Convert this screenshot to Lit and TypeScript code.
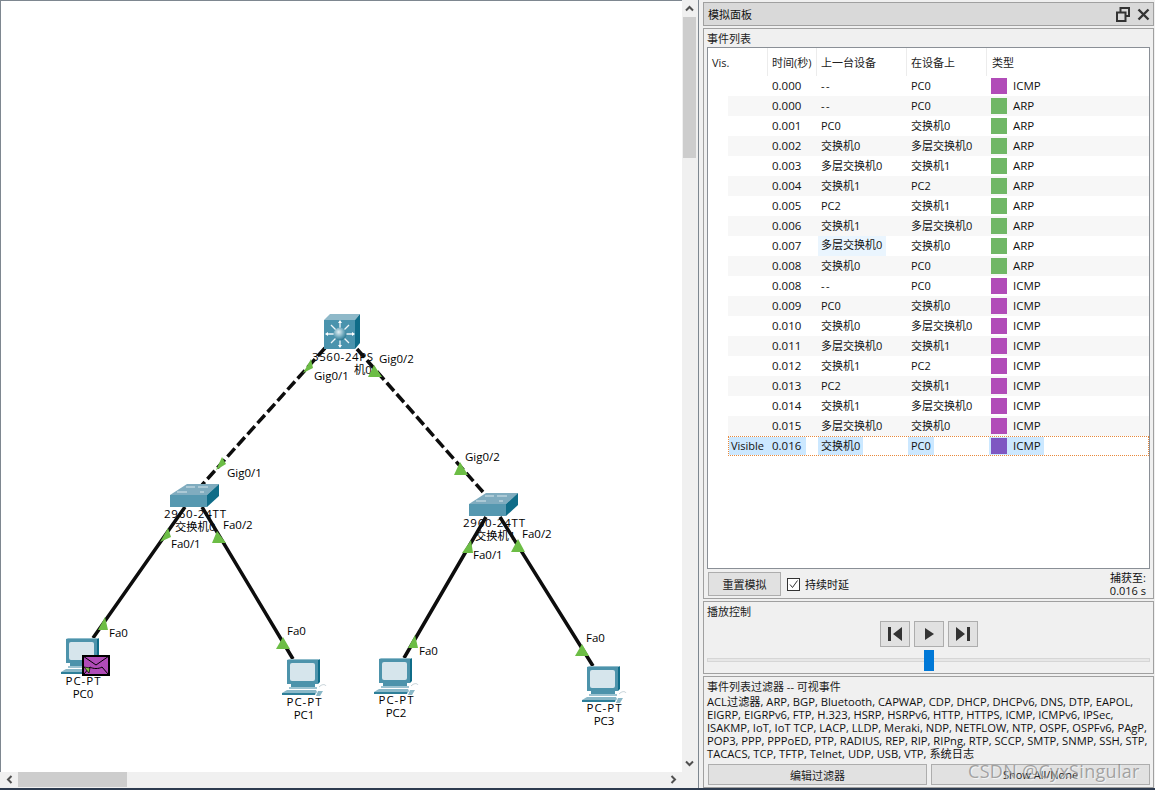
import { LitElement, html, css, svg } from 'lit';
import { customElement } from 'lit/decorators.js';

const PURPLE = '#b14cb8';
const GREEN = '#70b766';

type Row = [string, string, string, string, string];

const rows: Row[] = [
  ['0.000', '--', 'PC0', PURPLE, 'ICMP'],
  ['0.000', '--', 'PC0', GREEN, 'ARP'],
  ['0.001', 'PC0', '交换机0', GREEN, 'ARP'],
  ['0.002', '交换机0', '多层交换机0', GREEN, 'ARP'],
  ['0.003', '多层交换机0', '交换机1', GREEN, 'ARP'],
  ['0.004', '交换机1', 'PC2', GREEN, 'ARP'],
  ['0.005', 'PC2', '交换机1', GREEN, 'ARP'],
  ['0.006', '交换机1', '多层交换机0', GREEN, 'ARP'],
  ['0.007', '多层交换机0', '交换机0', GREEN, 'ARP'],
  ['0.008', '交换机0', 'PC0', GREEN, 'ARP'],
  ['0.008', '--', 'PC0', PURPLE, 'ICMP'],
  ['0.009', 'PC0', '交换机0', PURPLE, 'ICMP'],
  ['0.010', '交换机0', '多层交换机0', PURPLE, 'ICMP'],
  ['0.011', '多层交换机0', '交换机1', PURPLE, 'ICMP'],
  ['0.012', '交换机1', 'PC2', PURPLE, 'ICMP'],
  ['0.013', 'PC2', '交换机1', PURPLE, 'ICMP'],
  ['0.014', '交换机1', '多层交换机0', PURPLE, 'ICMP'],
  ['0.015', '多层交换机0', '交换机0', PURPLE, 'ICMP'],
];

const triangles = [
  '311,359 313,368 303,373', '222,457 226,464 216,470', '168,528 171,537 160,542',
  '217,531 226,543 212,543', '374,365 382,377 368,377', '460,462 468,475 454,475',
  '471,540 473,553 462,553', '518,539 525,552 511,552', '105,617 108,630 98,630',
  '283,637 290,649 276,649', '415,635 418,648 408,648', '582,644 589,656 575,656',
];

const portLabels: [number, number, string][] = [
  [314, 380, 'Gig0/1'], [227, 477, 'Gig0/1'], [379, 363, 'Gig0/2'], [465, 461, 'Gig0/2'],
  [171, 548, 'Fa0/1'], [223, 529, 'Fa0/2'], [522, 538, 'Fa0/2'], [473, 559, 'Fa0/1'],
  [109, 637, 'Fa0'], [287, 635, 'Fa0'], [419, 655, 'Fa0'], [586, 642, 'Fa0'],
];

const pcLabels: [number, number, string][] = [
  [83, 685, 'PC0'], [304, 706, 'PC1'], [396, 704, 'PC2'], [604, 712, 'PC3'],
];

function pc(x: number, y: number) {
  return svg`<g transform="translate(${x} ${y})">
    <path d="M5 1h31v24H5z" fill="#4d93ab"/>
    <path d="M36 1l2-1v23l-2 2z" fill="#0f6c88"/>
    <path d="M5 1l2-1h31l-2 1z" fill="#8fbccb"/>
    <rect x="8" y="4" width="25" height="18" rx="2" fill="#d6e5ec"/>
    <path d="M9 25h24v3H9z" fill="#4d93ab"/>
    <path d="M7 28h28v2H7z" fill="#9cc3d1"/>
    <path d="M5 31h29l1 2-2 3H0v-2z" fill="#8ab8c8"/>
    <path d="M0 34h33v2H0z" fill="#2e7f99"/>
    <path d="M36 32h5l-3 5h-4z" fill="#8ab8c8"/>
    <path d="M37 28c3-3 6-3 7-1" fill="none" stroke="#c3d0d6" stroke-width="1"/>
  </g>`;
}

function sw(x: number, y: number) {
  return svg`<g transform="translate(${x} ${y})">
    <path d="M0 11L17 0h32L37 11z" fill="#80acbf"/>
    <path d="M0 11h37v12H0z" fill="#5698b0"/>
    <path d="M37 11L49 0v12L37 23z" fill="#0f6c88"/>
    <path d="M16 3h9M28 3h10M7 8h10M30 8h4" stroke="#d7e6ec" stroke-width="1"/>
  </g>`;
}

@customElement('app-root')
export class AppRoot extends LitElement {
  static styles = css`
    :host {
      display: block;
      width: 1155px;
      height: 790px;
      overflow: hidden;
      background: #f0f0f0;
      color: #111;
      font-family: 'Open Sans', 'Noto Sans CJK SC', sans-serif;
      font-size: 11px;
    }
    * {
      box-sizing: border-box;
    }
    .page {
      position: relative;
      display: flex;
      height: 790px;
      border-bottom: 2px solid #2d3b4f;
    }
    .left {
      display: grid;
      grid-template-columns: 682px 15px;
      grid-template-rows: 772px 15px;
      width: 697px;
      flex: none;
    }
    .canvas {
      background: #fff;
      border-left: 1px solid #7e8790;
      border-top: 1px solid #7e8790;
    }
    .canvas svg {
      display: block;
      margin: -1px 0 0 -1px;
    }
    .canvas text {
      font-family: 'Open Sans', 'Noto Sans CJK SC', sans-serif;
      font-size: 11.5px;
      fill: #000;
    }
    .canvas text.cn {
      font-size: 11.3px;
    }
    .vbar {
      display: flex;
      flex-direction: column;
      align-items: center;
      background: #f0f0f0;
      padding: 0 1px;
    }
    .vbar .thumb {
      width: 13px;
      height: 141px;
      background: #cdcdcd;
    }
    .vbar .gap {
      flex: 1;
    }
    .arrow {
      flex: none;
      display: flex;
      align-items: center;
      justify-content: center;
      width: 15px;
      height: 17px;
    }
    .hbar {
      display: flex;
      align-items: center;
      background: #f0f0f0;
    }
    .hbar .arrow {
      width: 18px;
      height: 15px;
    }
    .hbar .thumb {
      width: 109px;
      height: 15px;
      background: #cdcdcd;
    }
    .hbar .gap {
      flex: 1;
    }
    .right {
      flex: 1;
      display: flex;
      flex-direction: column;
      gap: 2px;
      margin-left: 1px;
      border-left: 1px solid #7e8790;
      padding: 2px 2px 0 4px;
    }
    .title {
      display: flex;
      align-items: center;
      justify-content: space-between;
      height: 24px;
      padding: 0 3px 0 4px;
      background: #d9d9d9;
      border: 1px solid #a0a0a0;
    }
    .title .icons {
      display: flex;
      align-items: center;
      gap: 7px;
    }
    .group {
      border: 1px solid #a0a0a0;
      padding: 0 3px;
    }
    .group-label {
      display: block;
      line-height: 16px;
      height: 16px;
      color: #222;
    }
    .events {
      height: 571px;
      padding-top: 2px;
    }
    .table {
      height: 522px;
      background: #fff;
      border: 1px solid #8a8f96;
    }
    .row {
      display: grid;
      grid-template-columns: 60px 49px 90px 80px 1fr;
      height: 20px;
      align-items: center;
    }
    .row.head {
      height: 28px;
      color: #222;
    }
    .row.head > span {
      height: 28px;
      line-height: 30px;
      padding-left: 4px;
      border-right: 1px solid #ececec;
    }
    .row.head > span:last-child {
      border-right: 0;
      padding-left: 5px;
    }
    .row .time,
    .row .dev {
      padding: 0 0 2px 4px;
    }
    .row .time,
    .type {
      font-size: 11.5px;
    }
    .row .dash {
      letter-spacing: 1.5px;
    }
    .row.alt {
      background: linear-gradient(to right, #fff 20px, #f7f7f7 20px);
    }
    .row .dev.hover {
      height: 20px;
      line-height: 18px;
      margin-left: 1px;
      padding-left: 3px;
      background: #eaf5fe;
      width: 68px;
    }
    .type {
      display: flex;
      align-items: center;
      gap: 6px;
      height: 20px;
      padding-left: 4px;
    }
    .type b {
      font-weight: 400;
      margin-bottom: 2px;
    }
    .swatch {
      width: 16px;
      height: 16px;
    }
    .row.sel {
      grid-template-columns: 39px 49px 90px 80px 1fr;
      margin-left: 20px;
      border: 1px dotted #e8893c;
    }
    .row.sel > span {
      display: inline-flex;
      align-items: center;
      justify-self: start;
      height: 18px;
      background: #cce8ff;
    }
    .row.sel .vis {
      width: 39px;
      padding: 0 0 2px 2px;
    }
    .row.sel .time {
      width: 38px;
    }
    .row.sel .dev {
      margin-left: 1px;
      padding: 0 3px 2px;
    }
    .row.sel .type {
      margin-left: 2px;
      padding: 0 3px 0 2px;
    }
    .actions {
      display: flex;
      align-items: center;
      height: 30px;
      padding-left: 1px;
    }
    button {
      font: inherit;
      color: #222;
      background: #e1e1e1;
      border: 1px solid #adadad;
      padding: 0;
    }
    .reset {
      width: 73px;
      height: 24px;
    }
    .check {
      display: flex;
      align-items: center;
      gap: 5px;
      margin-left: 6px;
    }
    .box {
      display: flex;
      width: 13px;
      height: 13px;
      background: #fff;
      border: 1px solid #333;
    }
    .captured {
      margin-left: auto;
      text-align: right;
      line-height: 13px;
      padding-right: 4px;
    }
    .play {
      height: 73px;
      padding-top: 2px;
    }
    .transport {
      display: flex;
      justify-content: center;
      gap: 4px;
      margin-top: 1px;
      padding-left: 1px;
    }
    .transport button {
      display: flex;
      align-items: center;
      justify-content: center;
      width: 30px;
      height: 26px;
    }
    .slider {
      position: relative;
      height: 4px;
      margin-top: 11px;
      background: #e7e7e7;
      border: 1px solid #d6d6d6;
    }
    .slider i {
      position: absolute;
      left: 216px;
      top: -9px;
      width: 10px;
      height: 21px;
      background: #0078d7;
    }
    .filter {
      height: 112px;
      padding-top: 2px;
    }
    .filter p {
      margin: 0;
      line-height: 13px;
      font-size: 11.2px;
      white-space: nowrap;
    }
    .filter .buttons {
      display: grid;
      grid-template-columns: 219px 219px;
      gap: 4px;
      margin: 4px 0 0 1px;
    }
    .filter button {
      height: 21px;
    }
    .mark {
      position: absolute;
      left: 968px;
      top: 759px;
      font-size: 18px;
      line-height: 24px;
      letter-spacing: 0.3px;
      color: rgba(115, 115, 115, 0.62);
      text-shadow: 1px 1px 1px rgba(255, 255, 255, 0.7);
      white-space: nowrap;
    }
  `;

  private diagram() {
    return svg`<svg width="682" height="772" viewBox="0 0 682 772">
      <defs>
        <radialGradient id="ball" cx="0.4" cy="0.35" r="0.7">
          <stop offset="0" stop-color="#e3f0f4"/>
          <stop offset="0.55" stop-color="#6fa9bd"/>
          <stop offset="1" stop-color="#1f6f8a"/>
        </radialGradient>
      </defs>
      <text x="312" y="361" textLength="61">3560-24PS</text>
      <text class="cn" x="354" y="374">机0</text>
      <text x="164" y="518" textLength="62">2960-24TT</text>
      <text class="cn" x="175" y="531">交换机0</text>
      <text x="463" y="527" textLength="62">2960-24TT</text>
      <text class="cn" x="475" y="540">交换机1</text>

      <g stroke="#0d0d0d" stroke-width="3.5" fill="none">
        <path d="M325 348L202 485M357 349L483 492" stroke-dasharray="11 4"/>
        <path d="M185 507L93 638M202 507L293 659M486 517L404 658M500 517L593 666"/>
      </g>

      ${triangles.map((p) => svg`<polygon points=${p} fill="#6cbd45"/>`)}

      <path d="M324 320l6-6h30l-5 6z" fill="#8fb9c9"/>
      <path d="M324 320h31v29h-31z" fill="#4a93ad"/>
      <path d="M355 320l5-6v29l-5 6z" fill="#0f6c88"/>
      <path d="M340 322v24M327 334h26M331 325l18 18M349 325l-18 18" stroke="#eef5f7" stroke-width="1.3"/>
      <path d="M340 320l-2 3h4zM340 348l-2-3h4zM325 334l3-2v4zM355 334l-3-2v4z" fill="#fff"/>
      <circle cx="340" cy="334" r="6.5" fill="url(#ball)"/>
      ${sw(170, 484)}
      ${sw(469, 493)}
      ${pc(61, 638)}
      ${pc(282, 659)}
      ${pc(374, 658)}
      ${pc(582, 666)}

      <rect x="83" y="656" width="26" height="19" fill="#b04bb8" stroke="#000" stroke-width="2"/>
      <path d="M83 656l13 9 13-9M84 674l6-7c3 2 9 2 12 0l6 7" fill="none" stroke="#000" stroke-width="1"/>
      <path d="M84 667l6 1-1 5z" fill="#7fc241" stroke="#000" stroke-width="0.7"/>

      ${portLabels.map(([x, y, t]) => svg`<text x=${x} y=${y}>${t}</text>`)}
      ${pcLabels.map(([x, y, t]) => svg`
        <text x=${x} y=${y} text-anchor="middle" textLength="35">PC-PT</text>
        <text x=${x} y=${y + 13} text-anchor="middle">${t}</text>`)}
    </svg>`;
  }

  private arrow(d: string) {
    return html`<span class="arrow"><svg width="9" height="9" viewBox="0 0 9 9"><path d=${d} fill="none" stroke="#505050" stroke-width="2"/></svg></span>`;
  }

  private row(r: Row, i: number) {
    const hover = r[0] === '0.007';
    return html`<div class="row ${i % 2 ? 'alt' : ''}">
      <span></span>
      <span class="time">${r[0]}</span>
      <span class="dev ${r[1] === '--' ? 'dash' : ''} ${hover ? 'hover' : ''}">${r[1]}</span>
      <span class="dev">${r[2]}</span>
      <span class="type"><span class="swatch" style="background:${r[3]}"></span><b>${r[4]}</b></span>
    </div>`;
  }

  render() {
    return html`<div class="page">
      <div class="left">
        <div class="canvas">${this.diagram()}</div>
        <div class="vbar">
          ${this.arrow('M1 6.500l3.500-3.500L8 6.500')}
          <div class="thumb"></div>
          <div class="gap"></div>
          ${this.arrow('M1 2.500l3.500 3.500L8 2.500')}
        </div>
        <div class="hbar">
          ${this.arrow('M6.500 1L3 4.500 6.500 8')}
          <div class="thumb"></div>
          <div class="gap"></div>
          ${this.arrow('M2.500 1L6 4.500 2.500 8')}
        </div>
        <div></div>
      </div>

      <div class="right">
        <div class="title">
          <span>模拟面板</span>
          <span class="icons">
            <svg width="14" height="15" viewBox="0 0 14 15"><path d="M4.500 5V1h8.500v8H9.500M1 5.500h8.500V14H1z" fill="none" stroke="#333" stroke-width="2"/></svg>
            <svg width="13" height="13" viewBox="0 0 13 13"><path d="M1.500 1.500l10 10M11.500 1.500l-10 10" stroke="#333" stroke-width="2.400"/></svg>
          </span>
        </div>

        <div class="group events">
          <span class="group-label">事件列表</span>
          <div class="table">
            <div class="row head">
              <span>Vis.</span><span>时间(秒)</span><span>上一台设备</span><span>在设备上</span><span>类型</span>
            </div>
            ${rows.map((r, i) => this.row(r, i))}
            <div class="row sel">
              <span class="vis">Visible</span>
              <span class="time">0.016</span>
              <span class="dev">交换机0</span>
              <span class="dev">PC0</span>
              <span class="type"><span class="swatch" style="background:#7e57c2"></span><b>ICMP</b></span>
            </div>
          </div>
          <div class="actions">
            <button class="reset">重置模拟</button>
            <span class="check">
              <span class="box"><svg width="11" height="11" viewBox="0 0 11 11"><path d="M2 5.500l2.500 3L9.500 1.500" fill="none" stroke="#333" stroke-width="1"/></svg></span>
              持续时延
            </span>
            <span class="captured">捕获至:<br />0.016 s</span>
          </div>
        </div>

        <div class="group play">
          <span class="group-label">播放控制</span>
          <div class="transport">
            <button><svg width="16" height="16" viewBox="0 0 16 16"><path d="M1 1h3v14H1zM15 1v14L6 8z" fill="#333"/></svg></button>
            <button><svg width="16" height="16" viewBox="0 0 16 16"><path d="M4 2v12l9-6z" fill="#333"/></svg></button>
            <button><svg width="16" height="16" viewBox="0 0 16 16"><path d="M1 1v14l9-7zM12 1h3v14h-3z" fill="#333"/></svg></button>
          </div>
          <div class="slider"><i></i></div>
        </div>

        <div class="group filter">
          <span class="group-label">事件列表过滤器 -- 可视事件</span>
          <p>ACL过滤器, ARP, BGP, Bluetooth, CAPWAP, CDP, DHCP, DHCPv6, DNS, DTP, EAPOL,</p>
          <p>EIGRP, EIGRPv6, FTP, H.323, HSRP, HSRPv6, HTTP, HTTPS, ICMP, ICMPv6, IPSec,</p>
          <p>ISAKMP, IoT, IoT TCP, LACP, LLDP, Meraki, NDP, NETFLOW, NTP, OSPF, OSPFv6, PAgP,</p>
          <p>POP3, PPP, PPPoED, PTP, RADIUS, REP, RIP, RIPng, RTP, SCCP, SMTP, SNMP, SSH, STP,</p>
          <p>TACACS, TCP, TFTP, Telnet, UDP, USB, VTP, 系统日志</p>
          <div class="buttons">
            <button>编辑过滤器</button>
            <button>Show All/None</button>
          </div>
        </div>
      </div>

      <div class="mark">CSDN @CyxSingular</div>
    </div>`;
  }
}
